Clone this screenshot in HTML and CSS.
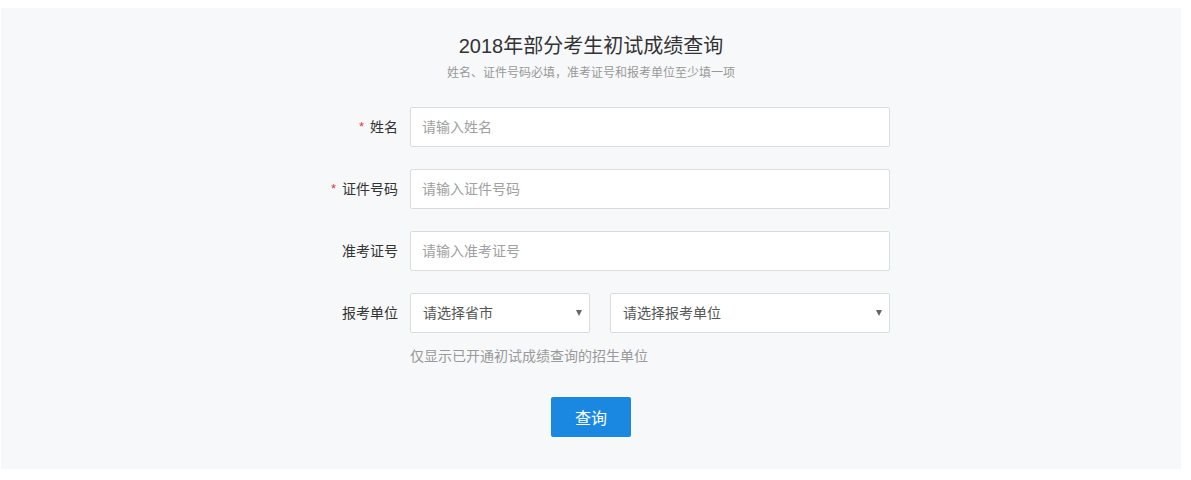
FILE: index.html
```html
<!DOCTYPE html>
<html lang="zh-CN">
<head>
<meta charset="utf-8">
<title>2018年部分考生初试成绩查询</title>
<link rel="stylesheet" href="styles.css">
</head>
<body>
<div class="panel">
  <h1 class="title">2018年部分考生初试成绩查询</h1>
  <p class="subtitle">姓名、证件号码必填，准考证号和报考单位至少填一项</p>
  <form class="form">
    <label class="label"><span class="req">*</span>姓名</label>
    <input class="input" type="text" placeholder="请输入姓名">
    <label class="label"><span class="req">*</span>证件号码</label>
    <input class="input" type="text" placeholder="请输入证件号码">
    <label class="label">准考证号</label>
    <input class="input" type="text" placeholder="请输入准考证号">
    <label class="label">报考单位</label>
    <div class="selects">
      <div class="select-wrap small"><select class="select"><option>请选择省市</option></select></div>
      <div class="select-wrap large"><select class="select"><option>请选择报考单位</option></select></div>
    </div>
    <div></div>
    <p class="hint">仅显示已开通初试成绩查询的招生单位</p>
  </form>
  <div class="actions"><button class="btn" type="button">查询</button></div>
</div>
</body>
</html>
```

FILE: styles.css
```css
html, body {
  background: #ffffff;
}
body {
  margin: 8px 10px 0 1px;
  font-family: "Liberation Sans", "Noto Sans CJK SC", sans-serif;
  color: #333;
}
.panel {
  background: #f7f8fa;
  padding: 25px 0 32px;
}
.title {
  margin: 0;
  text-align: center;
  font-size: 20px;
  line-height: 26px;
  font-weight: normal;
  color: #333;
}
.subtitle {
  margin: 5px 0 0;
  text-align: center;
  font-size: 12px;
  line-height: 18px;
  color: #999;
}
.form {
  width: 598px;
  margin: 25px auto 0;
  display: grid;
  grid-template-columns: 118px 480px;
  row-gap: 22px;
}
.label {
  display: flex;
  align-items: center;
  justify-content: flex-end;
  padding-right: 12px;
  padding-bottom: 2px;
  box-sizing: border-box;
  font-size: 14px;
  color: #333;
  height: 40px;
}
.req {
  color: #e4393c;
  margin-right: 6px;
  font-size: 13px;
}
.input {
  box-sizing: border-box;
  height: 40px;
  width: 480px;
  border: 1px solid #dcdcdc;
  border-radius: 2px;
  background: #fff;
  padding: 0 11px;
  font-size: 14px;
  font-family: inherit;
  color: #333;
  outline: none;
}
.input::placeholder {
  color: #a0a0a0;
}
.selects {
  display: flex;
  gap: 20px;
}
.select-wrap {
  position: relative;
  height: 40px;
}
.select-wrap.small { width: 180px; }
.select-wrap.large { width: 280px; }
.select-wrap::after {
  content: "";
  position: absolute;
  right: 8px;
  top: 17px;
  border-left: 3px solid transparent;
  border-right: 3px solid transparent;
  border-top: 6px solid #666;
  pointer-events: none;
}
.select {
  box-sizing: border-box;
  width: 100%;
  height: 40px;
  border: 1px solid #dcdcdc;
  border-radius: 2px;
  background: #fff;
  padding: 0 12px;
  font-size: 14px;
  font-family: inherit;
  color: #555;
  -webkit-appearance: none;
  appearance: none;
  outline: none;
}
.hint {
  margin: -9px 0 0;
  font-size: 14px;
  line-height: 20px;
  color: #999;
}
.actions {
  display: flex;
  justify-content: center;
  margin-top: 31px;
}
.btn {
  width: 80px;
  height: 40px;
  border: none;
  border-radius: 2px;
  background: #1a87e0;
  color: #fff;
  font-size: 16px;
  font-family: inherit;
  cursor: pointer;
}
```
